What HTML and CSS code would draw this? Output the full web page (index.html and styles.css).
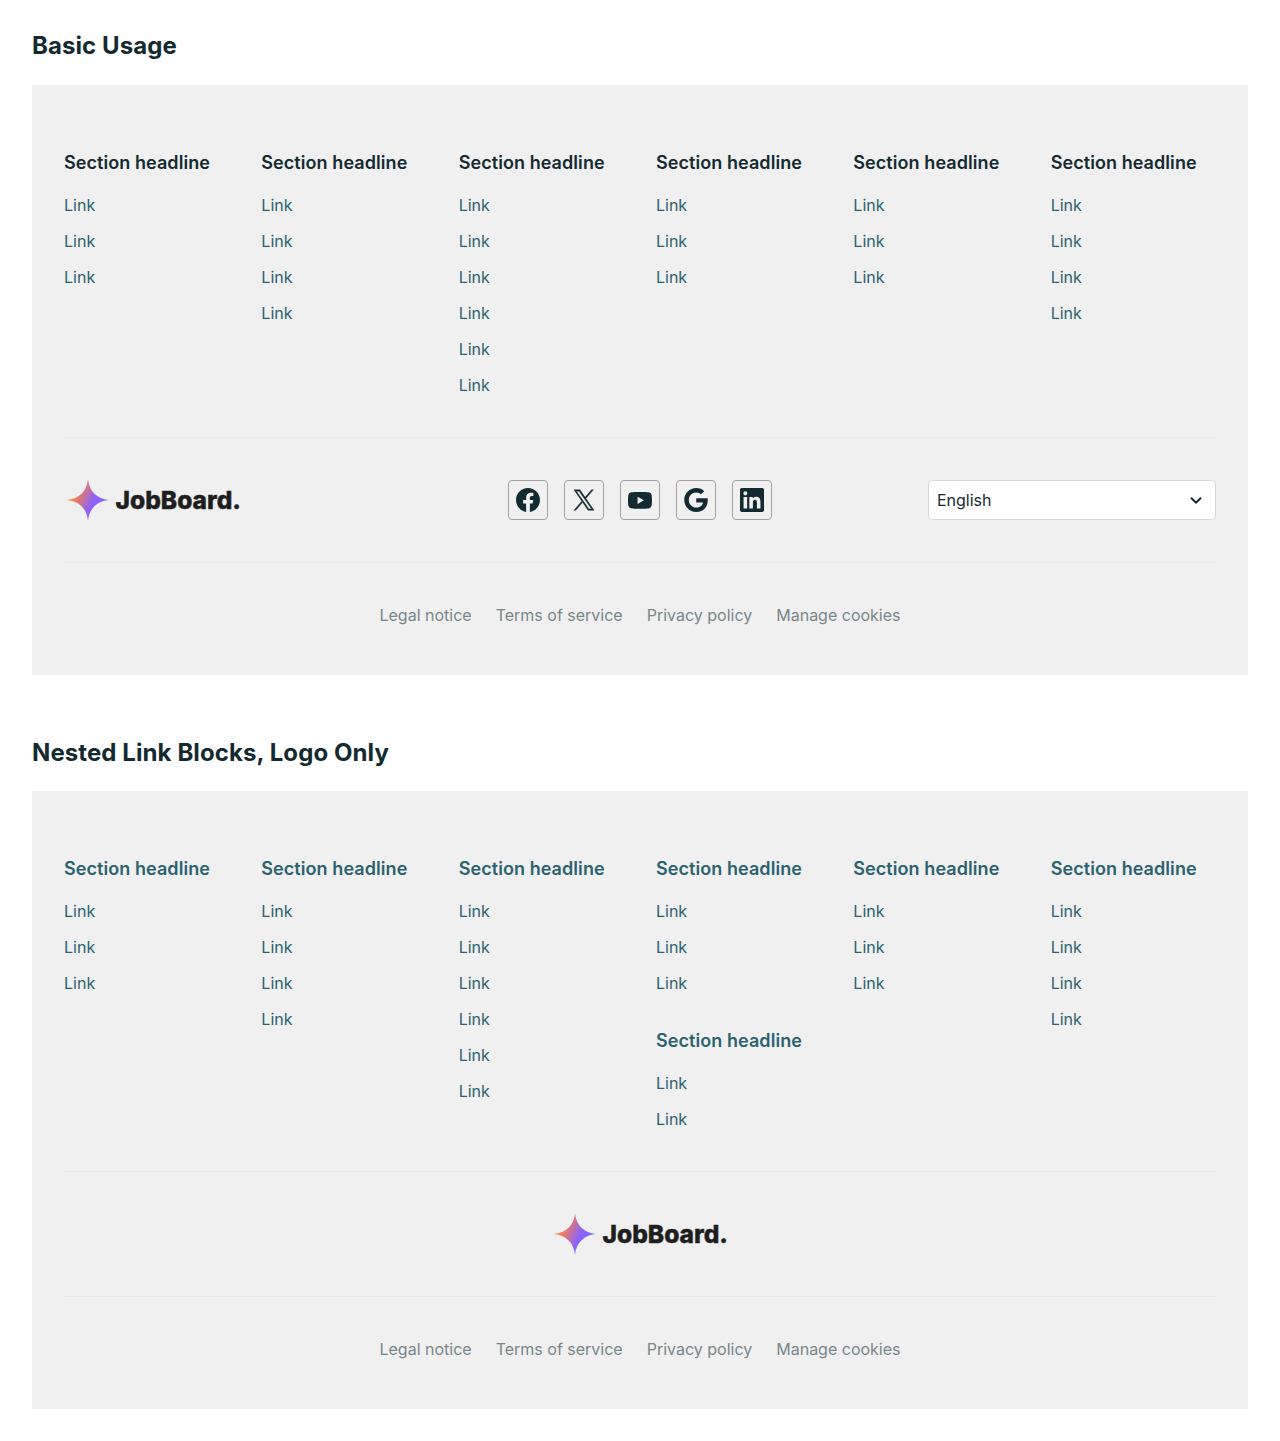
FILE: index.html
```html
<!DOCTYPE html>
<html lang="en">
<head>
<meta charset="utf-8">
<title>Footer</title>
<link rel="stylesheet" href="styles.css">
</head>
<body>
<svg class="defs" width="0" height="0" aria-hidden="true">
  <defs>
    <linearGradient id="spark" gradientUnits="userSpaceOnUse" x1="4" y1="13" x2="44" y2="31">
      <stop offset="0.18" stop-color="#ff8040"/>
      <stop offset="0.62" stop-color="#8c62ff"/>
      <stop offset="0.8" stop-color="#8c62ff"/>
      <stop offset="1" stop-color="#30e8c0"/>
    </linearGradient>
    <symbol id="logo" viewBox="0 0 178 44">
      <path fill="url(#spark)" d="M24 1C25 13 33 21 45 22C33 23 25 31 24 43C23 31 15 23 3 22C15 21 23 13 24 1Z"/>
      <text x="51.500" y="31" textLength="125.500" lengthAdjust="spacingAndGlyphs" font-family="Inter, sans-serif" font-size="25" font-weight="800" fill="#1e1e1e" stroke="#1e1e1e" stroke-width="0.400">JobBoard.</text>
    </symbol>
  </defs>
</svg>

<section class="example">
  <h2 class="title">Basic Usage</h2>
  <footer class="footer">
    <nav class="columns">
      <div class="block"><h3>Section headline</h3><a>Link</a><a>Link</a><a>Link</a></div>
      <div class="block"><h3>Section headline</h3><a>Link</a><a>Link</a><a>Link</a><a>Link</a></div>
      <div class="block"><h3>Section headline</h3><a>Link</a><a>Link</a><a>Link</a><a>Link</a><a>Link</a><a>Link</a></div>
      <div class="block"><h3>Section headline</h3><a>Link</a><a>Link</a><a>Link</a></div>
      <div class="block"><h3>Section headline</h3><a>Link</a><a>Link</a><a>Link</a></div>
      <div class="block"><h3>Section headline</h3><a>Link</a><a>Link</a><a>Link</a><a>Link</a></div>
    </nav>
    <div class="middle">
      <svg class="logo" role="img" aria-label="JobBoard"><use href="#logo"/></svg>
      <div class="social">
        <a class="social-link" aria-label="Facebook"><svg viewBox="0 0 24 24"><path d="M24 12.073c0-6.627-5.373-12-12-12s-12 5.373-12 12c0 5.99 4.388 10.954 10.125 11.854v-8.385H7.078v-3.47h3.047V9.43c0-3.007 1.792-4.669 4.533-4.669 1.312 0 2.686.235 2.686.235v2.953H15.83c-1.491 0-1.956.925-1.956 1.874v2.25h3.328l-.532 3.47h-2.796v8.385C19.612 23.027 24 18.062 24 12.073z"/></svg></a>
        <a class="social-link" aria-label="X"><svg viewBox="0 0 24 24"><path class="x-mark" transform="translate(2 1.8) scale(.01667)" d="M714.163 519.284L1160.89 0H1055.03L667.137 450.887L357.328 0H0L468.492 681.821L0 1226.37H105.866L515.491 750.218L842.672 1226.37H1200L714.137 519.284H714.163ZM569.165 687.828L521.697 619.934L144.011 79.6944H306.615L611.412 515.685L658.88 583.579L1055.08 1150.3H892.476L569.165 687.854V687.828Z"/></svg></a>
        <a class="social-link" aria-label="YouTube"><svg viewBox="0 0 24 24"><path d="M23.5 6.5a3 3 0 0 0-2.1-2.1C19.5 3.9 12 3.9 12 3.9s-7.500 0-9.400.5A3 3 0 0 0 .5 6.500C0 8.400 0 12.300 0 12.300s0 3.900.5 5.800a3 3 0 0 0 2.100 2.100c1.900.5 9.400.5 9.400.5s7.500 0 9.400-.5a3 3 0 0 0 2.100-2.100c.5-1.900.5-5.800.5-5.800s0-3.900-.5-5.800zM9.600 15.900V8.700l6.300 3.600z"/></svg></a>
        <a class="social-link" aria-label="Google"><svg viewBox="0 0 24 24"><path d="M12.240 10.285V14.400h6.806c-.275 1.765-2.056 5.174-6.806 5.174-4.095 0-7.439-3.389-7.439-7.574s3.345-7.570 7.439-7.570c2.330 0 3.891.989 4.785 1.849l3.254-3.138C18.189 1.186 15.479 0 12.240 0c-6.635 0-12 5.365-12 12s5.365 12 12 12c6.926 0 11.520-4.869 11.520-11.726 0-.788-.085-1.390-.189-1.989H12.240z"/></svg></a>
        <a class="social-link" aria-label="LinkedIn"><svg viewBox="0 0 24 24"><path d="M22.230 0H1.770C.790 0 0 .770 0 1.730v20.540C0 23.230.790 24 1.770 24h20.460c.980 0 1.770-.770 1.770-1.730V1.730C24 .770 23.210 0 22.230 0zM7.120 20.450H3.560V9h3.560v11.450zM5.340 7.430a2.060 2.060 0 1 1 0-4.130 2.060 2.060 0 0 1 0 4.130zm15.110 13.020h-3.560v-5.570c0-1.330-.030-3.040-1.850-3.040-1.850 0-2.140 1.450-2.140 2.940v5.670H9.350V9h3.410v1.560h.050c.480-.900 1.640-1.850 3.370-1.850 3.600 0 4.270 2.370 4.270 5.460v6.280z"/></svg></a>
      </div>
      <div class="select"><span>English</span><svg class="chevron" viewBox="0 0 24 24"><path d="M7 9.700l5 5 5-5"/></svg></div>
    </div>
    <div class="legal"><a>Legal notice</a><a>Terms of service</a><a>Privacy policy</a><a>Manage cookies</a></div>
  </footer>
</section>

<section class="example">
  <h2 class="title">Nested Link Blocks, Logo Only</h2>
  <footer class="footer linked">
    <nav class="columns">
      <div class="block"><h3>Section headline</h3><a>Link</a><a>Link</a><a>Link</a></div>
      <div class="block"><h3>Section headline</h3><a>Link</a><a>Link</a><a>Link</a><a>Link</a></div>
      <div class="block"><h3>Section headline</h3><a>Link</a><a>Link</a><a>Link</a><a>Link</a><a>Link</a><a>Link</a></div>
      <div class="stack">
        <div class="block"><h3>Section headline</h3><a>Link</a><a>Link</a><a>Link</a></div>
        <div class="block"><h3>Section headline</h3><a>Link</a><a>Link</a></div>
      </div>
      <div class="block"><h3>Section headline</h3><a>Link</a><a>Link</a><a>Link</a></div>
      <div class="block"><h3>Section headline</h3><a>Link</a><a>Link</a><a>Link</a><a>Link</a></div>
    </nav>
    <div class="middle logo-only">
      <svg class="logo" role="img" aria-label="JobBoard"><use href="#logo"/></svg>
    </div>
    <div class="legal"><a>Legal notice</a><a>Terms of service</a><a>Privacy policy</a><a>Manage cookies</a></div>
  </footer>
</section>
</body>
</html>
```
FILE: styles.css
```css
* { box-sizing: border-box; }
body {
  margin: 0;
  padding: 32px;
  display: flex;
  flex-direction: column;
  gap: 64px;
  background: #fff;
  color: #132a31;
  font: 400 16px/24px Inter, sans-serif;
}
.defs { position: absolute; }
.title { margin: 0 0 24px; font-size: 24px; line-height: 28.8px; font-weight: 700; letter-spacing: 0.09px; }
.footer { background: #f0f0f0; padding: 64px 32px 48px; }
.columns {
  display: grid;
  grid-template-columns: repeat(6, 1fr);
  gap: 32px;
  padding-bottom: 40px;
}
.stack { display: flex; flex-direction: column; gap: 32px; }
.block { display: flex; flex-direction: column; gap: 12px; color: #2b6270; }
.block h3 {
  margin: 0 0 4px;
  font-size: 18px;
  line-height: 27.8px;
  font-weight: 600;
  letter-spacing: 0.07px;
  color: #132a31;
  white-space: nowrap;
}
.linked .block h3 { color: #2b6270; }
.middle {
  display: grid;
  grid-template-columns: repeat(3, 1fr);
  gap: 32px;
  align-items: center;
  padding: 40px 0;
  border: solid #e8e8e8;
  border-width: 1px 0;
}
.logo-only { display: flex; justify-content: center; }
.logo { display: block; width: 178px; height: 44px; }
.social { display: flex; justify-content: center; gap: 16px; }
.social-link {
  display: flex;
  align-items: center;
  justify-content: center;
  width: 40px;
  height: 40px;
  border: 1px solid #a0a0a0;
  border-radius: 4px;
}
.social-link svg { width: 24px; height: 24px; fill: #132a31; }
.x-mark { stroke: #132a31; stroke-width: 26; }
.select {
  display: flex;
  align-items: center;
  justify-content: space-between;
  justify-self: end;
  width: 288px;
  height: 40px;
  padding: 0 7px 0 8px;
  background: #fff;
  border: 1px solid #d7d7d7;
  border-radius: 4px;
}
.chevron { width: 24px; height: 24px; fill: none; stroke: #132a31; stroke-width: 2; }
.legal { display: flex; justify-content: center; gap: 24px; padding-top: 40px; color: #788688; }
```
